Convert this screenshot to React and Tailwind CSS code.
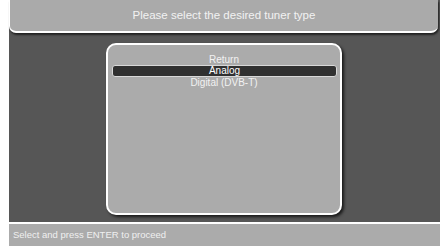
export default function App() {
  const font = { fontFamily: '"Liberation Sans", Arial, sans-serif' };
  return (
    <div className="w-[440px] h-[246px] bg-white pl-[9px] flex overflow-hidden" style={font}>
      <div className="flex-1 flex flex-col bg-[#565656]">
        <div className="h-[33px] mr-[2px] bg-[#aaaaaa] rounded-b-[7px] border-b-[2px] border-l border-white shadow-[1px_2px_2px_rgba(0,0,0,0.6)] flex items-center justify-center">
          <span className="text-[11.5px] text-[#f2f2f2] leading-none pt-[1px]">Please select the desired tuner type</span>
        </div>
        <div className="flex-1 flex justify-center pt-[10px] pb-[7px]">
          <div className="w-[236px] ml-[-1px] bg-[#ababab] border-2 border-white rounded-[10px] shadow-[2px_2px_3px_rgba(0,0,0,0.7)] pt-[9px] px-[4px] flex flex-col">
            <div className="h-[11px] flex items-center justify-center text-[10px] text-[#f2f2f2] leading-none">Return</div>
            <div className="h-[12px] mr-[-1px] flex items-center justify-center text-[10px] text-white leading-none bg-[#303030] border border-[#d8d8d8] rounded-[3px]">Analog</div>
            <div className="h-[12px] flex items-center justify-center text-[10px] text-[#f2f2f2] leading-none">Digital (DVB-T)</div>
          </div>
        </div>
        <div className="h-[24px] bg-[#ababab] border-t-[2px] border-white flex items-center pl-[4px]">
          <span className="text-[9.5px] text-[#f0f0f0] leading-none">Select and press ENTER to proceed</span>
        </div>
      </div>
    </div>
  );
}
